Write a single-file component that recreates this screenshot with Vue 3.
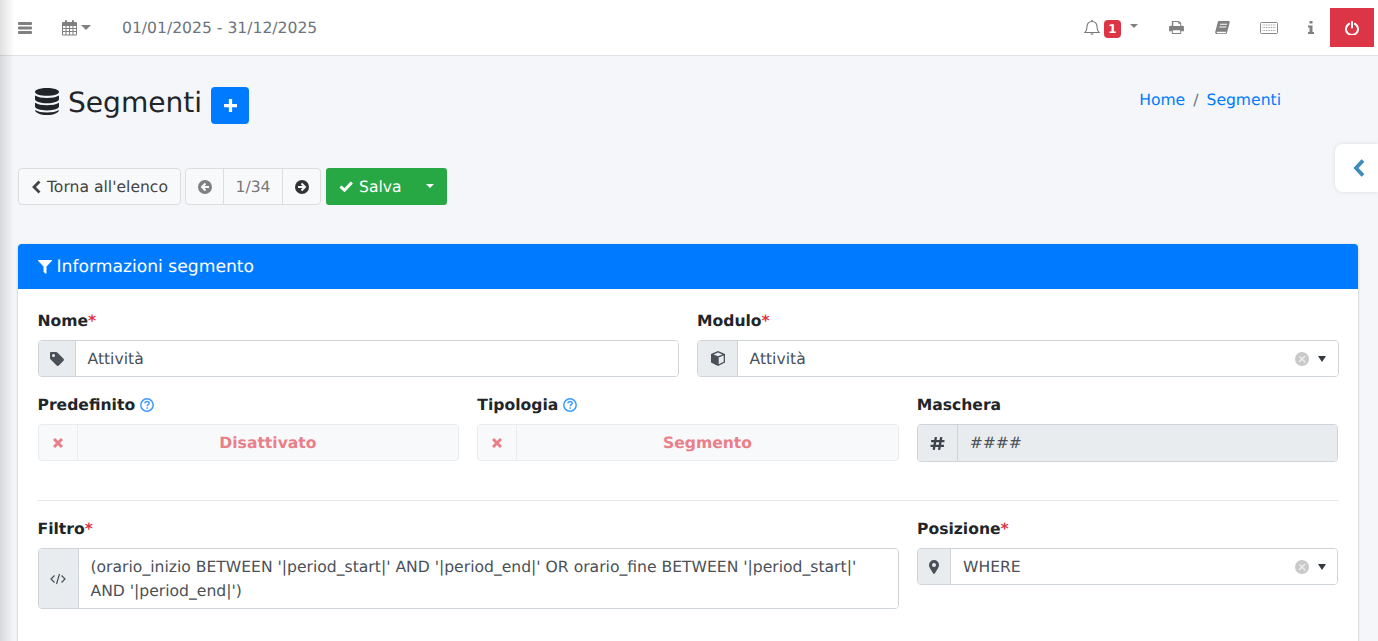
<script setup>
const rightIcons = ['print', 'book', 'keyboard', 'info']
</script>

<template>
  <div class="page">
    <div class="edge"></div>
    <nav class="topbar">
      <svg class="i-bars" viewBox="0 0 14 12"><path d="M1 0h12a1 1 0 0 1 1 1v1a1 1 0 0 1-1 1H1a1 1 0 0 1-1-1V1a1 1 0 0 1 1-1zM1 4.500h12a1 1 0 0 1 1 1v1a1 1 0 0 1-1 1H1a1 1 0 0 1-1-1v-1a1 1 0 0 1 1-1zM1 9h12a1 1 0 0 1 1 1v1a1 1 0 0 1-1 1H1a1 1 0 0 1-1-1v-1a1 1 0 0 1 1-1z"/></svg>
      <svg class="i-cal" viewBox="0 0 15 16"><path fill-rule="evenodd" d="M1 2h2V1a1 1 0 0 1 2 0v1h5V1a1 1 0 0 1 2 0v1h2a1 1 0 0 1 1 1v11.500a1 1 0 0 1-1 1H1a1 1 0 0 1-1-1V3a1 1 0 0 1 1-1zM1 6v2h2.500V6zM4.500 6v2H7V6zM8 6v2h2.500V6zM11.500 6v2H14V6zM1 9v2h2.500V9zM4.500 9v2H7V9zM8 9v2h2.500V9zM11.500 9v2H14V9zM1 12v2.500h2.500V12zM4.500 12v2.500H7V12zM8 12v2.500h2.500V12zM11.500 12v2.500H14V12z"/></svg>
      <span class="caret grey cal-caret"></span>
      <span class="date">01/01/2025 - 31/12/2025</span>
      <div class="nav-right">
        <svg class="i-bell" viewBox="0 0 16 17"><path fill="none" stroke="#777" stroke-width="1.100" d="M1 13.500c1.500-1.500 2-3 2-6 0-3 2-5 5-5s5 2 5 5c0 3 .5 4.500 2 6z"/><path d="M6.300 14.500a1.800 1.800 0 0 0 3.400 0zM7.200 1.500a.8.800 0 0 1 1.600 0v1H7.200z" fill="#777"/></svg>
        <span class="badge">1</span>
        <span class="caret grey bell-caret"></span>
        <template v-for="n in rightIcons" :key="n">
          <svg v-if="n === 'print'" class="i-print" viewBox="0 0 16 14"><path fill-rule="evenodd" d="M3.500 0h7L13 2v3h1.500A1.500 1.500 0 0 1 16 6.500V11h-3v3H3v-3H0V6.500A1.500 1.500 0 0 1 1.500 5H3V0zm1 1v4.500h7.500V3H10V1zM4 10v3h8v-3z"/></svg>
          <svg v-else-if="n === 'book'" class="i-book" viewBox="0 0 16 15"><path fill-rule="evenodd" d="M4 0h10.500c1 0 1.500.7 1.200 1.500L12.800 12.500c-.3.800-1 1.500-2 1.500H2c-1.300 0-2-1-1.800-2.200L3 1c.2-.6.500-1 1-1zM5.500 3l-.3 1h7.500l.3-1zM4.700 6l-.3 1h7.500l.3-1zM2.600 11.500c-.5 0-.8.300-.8.700s.3.800.9.800h8c.5 0 .8-.2 1-.7l.2-.8z"/></svg>
          <svg v-else-if="n === 'keyboard'" class="i-key" viewBox="0 0 18 12"><rect x=".5" y=".5" width="17" height="11" rx="1" fill="#fff" stroke="#8a8a8a"/><path d="M2.500 3h13M2.500 5.500h13M2.500 8.500h13" stroke="#a0a0a0" stroke-width="1.200" stroke-dasharray="1 .7" fill="none"/></svg>
          <svg v-else class="i-info" viewBox="0 0 6 13"><path d="M1.500 0h3v2.500h-3zM0 4.500h4.500V11H6v2H0v-2h1.500V6.500H0z"/></svg>
        </template>
        <button class="power" aria-label="Esci">
          <svg viewBox="0 0 14 14" width="14" height="14"><path fill="none" stroke="#fff" stroke-width="2" stroke-linecap="round" d="M4 2.800a6 6 0 1 0 6 0M7 1v5.500"/></svg>
        </button>
      </div>
    </nav>

    <main class="content">
      <header class="head">
        <h1 class="title">
          <svg class="i-db" viewBox="0 0 24 29" preserveAspectRatio="none"><path d="M12 0c6.600 0 12 1.800 12 4.200S18.600 8.400 12 8.400 0 6.600 0 4.200 5.400 0 12 0zM0 8c2.500 1.800 7 2.700 12 2.700S21.500 9.800 24 8v4c0 2.300-5.400 4.300-12 4.300S0 14.300 0 12zM0 15.800c2.500 1.800 7 2.700 12 2.700s9.500-.9 12-2.700v4.200c0 2.300-5.400 4.200-12 4.200S0 22.300 0 20zM0 23.500c2.500 1.800 7 2.700 12 2.700s9.500-.9 12-2.700c0 3-5.400 5.500-12 5.500S0 26.500 0 23.500z"/></svg>
          <span>Segmenti</span>
          <button class="add" aria-label="Aggiungi">
            <svg viewBox="0 0 12 12" width="13" height="13"><path fill="#fff" d="M4.500 0h3v4.500H12v3H7.500V12h-3V7.500H0v-3h4.500z"/></svg>
          </button>
        </h1>
        <div class="crumbs"><a>Home</a><span class="sep">/</span><a>Segmenti</a></div>
      </header>

      <div class="toolbar">
        <button class="btn light back">
          <svg viewBox="0 0 10 14" width="10" height="14"><path fill="none" stroke="#444" stroke-width="2.800" d="M8.500 1.500 3 7l5.500 5.500"/></svg>
          <span>Torna all'elenco</span>
        </button>
        <div class="pager">
          <span class="pg pg-a"><svg viewBox="0 0 14 14" width="14" height="14"><circle cx="7" cy="7" r="7" fill="#808080"/><path d="M7.500 3.500 4 7l3.500 3.500M4.500 7H11" stroke="#f8f9fa" stroke-width="2" fill="none"/></svg></span>
          <span class="pg pg-num">1/34</span>
          <span class="pg pg-c"><svg viewBox="0 0 14 14" width="14" height="14"><circle cx="7" cy="7" r="7" fill="#333"/><path d="M6.500 3.500 10 7l-3.500 3.500M9.500 7H3" stroke="#f8f9fa" stroke-width="2" fill="none"/></svg></span>
        </div>
        <div class="save">
          <span class="save-main">
            <svg viewBox="0 0 14 11" width="14" height="11"><path fill="none" stroke="#fff" stroke-width="3" d="M1.500 5.500 5.500 9.200 12.800 1.500"/></svg>
            Salva
          </span>
          <span class="save-drop"><span class="caret white"></span></span>
        </div>
      </div>

      <section class="card">
        <div class="card-head">
          <svg viewBox="0 0 14 14" width="14" height="14"><path fill="#fff" d="M.5 0h13c.5 0 .7.500.3.900L8.500 6.500V13c0 .6-.5.800-1 .5L5.700 12c-.2-.2-.2-.3-.2-.5v-5L.2.900C-.2.500 0 0 .5 0z"/></svg>
          <span>Informazioni segmento</span>
        </div>
        <div class="card-body">
          <div class="row two">
            <div class="field">
              <label>Nome<em>*</em></label>
              <div class="group">
                <span class="addon w38"><svg viewBox="0 0 14 14" width="14" height="14"><path fill="#495057" fill-rule="evenodd" d="M1 0h5c.5 0 1 .2 1.300.5l6.200 6.200c.6.600.6 1.500 0 2.100l-4.700 4.700c-.6.600-1.500.6-2.100 0L.5 7.300C.2 7 0 6.500 0 6V1c0-.5.500-1 1-1zm2.500 2A1.500 1.500 0 1 0 3.500 5a1.500 1.500 0 0 0 0-3z"/></svg></span>
                <div class="control">Attività</div>
              </div>
            </div>
            <div class="field">
              <label>Modulo<em>*</em></label>
              <div class="group">
                <span class="addon w41"><svg viewBox="0 0 14 15" width="14" height="15"><path fill="#495057" fill-rule="evenodd" d="M7 0l7 3v8.500L7 15l-7-3.500V3zM7 1.500 2.500 3.400 7 5.300l4.500-1.900zM7.700 6.500v6.700l5-2.500V4.400z"/></svg></span>
                <div class="control select wide"><span>Attività</span><svg class="clear" viewBox="0 0 14 14"><circle cx="7" cy="7" r="7" fill="#c9c9c9"/><path d="M4.500 4.500l6 6M10 4l-6 6" stroke="#f0f0f0" stroke-width="1.300"/></svg><i class="sel-caret"></i></div>
              </div>
            </div>
          </div>

          <div class="row three">
            <div class="field">
              <label>Predefinito <svg class="q" viewBox="0 0 14 14"><circle cx="7" cy="7" r="6.200" fill="none" stroke="#3f9bff" stroke-width="1.500"/><path d="M4.900 5.400C5 4 6 3.400 7.100 3.400c1.200 0 2.100.8 2.100 1.800 0 1.500-2 1.500-2 3" fill="none" stroke="#3f9bff" stroke-width="1.500"/><rect x="6.400" y="9.300" width="1.500" height="1.500" fill="#3f9bff"/></svg></label>
              <div class="toggle"><span class="t-x"><svg viewBox="0 0 10 10" width="10" height="10"><path stroke="#e97f89" stroke-width="3" d="M1 1l8 8M9 1l-8 8"/></svg></span><span class="t-txt">Disattivato</span></div>
            </div>
            <div class="field">
              <label>Tipologia <svg class="q" viewBox="0 0 14 14"><circle cx="7" cy="7" r="6.200" fill="none" stroke="#3f9bff" stroke-width="1.500"/><path d="M4.900 5.400C5 4 6 3.400 7.100 3.400c1.200 0 2.100.8 2.100 1.800 0 1.500-2 1.500-2 3" fill="none" stroke="#3f9bff" stroke-width="1.500"/><rect x="6.400" y="9.300" width="1.500" height="1.500" fill="#3f9bff"/></svg></label>
              <div class="toggle"><span class="t-x"><svg viewBox="0 0 10 10" width="10" height="10"><path stroke="#e97f89" stroke-width="3" d="M1 1l8 8M9 1l-8 8"/></svg></span><span class="t-txt">Segmento</span></div>
            </div>
            <div class="field">
              <label>Maschera</label>
              <div class="group tall">
                <span class="addon w41"><svg viewBox="0 0 14 14" width="15" height="15"><path fill="none" stroke="#3d434a" stroke-width="2.200" d="M5.500 1 3.500 13M10.500 1l-2 12M1 4.800h12.500M.5 9.200H13"/></svg></span>
                <div class="control disabled">####</div>
              </div>
            </div>
          </div>

          <hr />

          <div class="row filter">
            <div class="field">
              <label>Filtro<em>*</em></label>
              <div class="group auto">
                <span class="addon w41"><svg viewBox="0 0 16 12" width="16" height="12"><path fill="none" stroke="#495057" stroke-width="1.200" d="M4.500 2.500 1 6l3.500 3.500M11.500 2.500 15 6l-3.500 3.500M9.500 1 6.500 11"/></svg></span>
                <div class="control multi">(orario_inizio BETWEEN '|period_start|' AND '|period_end|' OR orario_fine BETWEEN '|period_start|' AND '|period_end|')</div>
              </div>
            </div>
            <div class="field">
              <label>Posizione<em>*</em></label>
              <div class="group">
                <span class="addon w34"><svg viewBox="0 0 10 14" width="10" height="14"><path fill="#495057" fill-rule="evenodd" d="M5 0a5 5 0 0 1 5 5c0 1.300-.5 2.300-1 3.200L5.800 13.500c-.4.600-1.200.6-1.600 0L1 8.200C.5 7.300 0 6.300 0 5a5 5 0 0 1 5-5zm0 3a2 2 0 1 0 0 4 2 2 0 0 0 0-4z"/></svg></span>
                <div class="control select"><span>WHERE</span><svg class="clear" viewBox="0 0 14 14"><circle cx="7" cy="7" r="7" fill="#c9c9c9"/><path d="M4.500 4.500l6 6M10 4l-6 6" stroke="#f0f0f0" stroke-width="1.300"/></svg><i class="sel-caret"></i></div>
              </div>
            </div>
          </div>
        </div>
      </section>
    </main>

    <button class="side-tab" aria-label="Apri">
      <svg viewBox="0 0 12 18" width="12" height="18"><path fill="none" stroke="#3c8dbc" stroke-width="3.800" d="M10 1.500 3 9l7 7.500"/></svg>
    </button>
  </div>
</template>

<style>
html, body { margin: 0; padding: 0; }
</style>

<style scoped>
.page {
  position: relative;
  height: 641px;
  overflow: hidden;
  background: #f4f6f9;
  color: #212529;
  font-family: "DejaVu Sans", sans-serif;
  font-size: 15.600px;
  line-height: 24px;
  text-rendering: geometricPrecision;
}
.edge {
  position: absolute;
  left: 0;
  top: 0;
  bottom: 0;
  width: 14px;
  background: linear-gradient(to right, rgba(0, 0, 0, .12), rgba(0, 0, 0, 0));
  pointer-events: none;
  z-index: 3;
}
button { border: 0; padding: 0; font: inherit; text-rendering: inherit; }

/* top bar */
.topbar {
  height: 55px;
  box-sizing: content-box;
  background: #fff;
  border-bottom: 1px solid #dee2e6;
  display: flex;
  align-items: center;
  color: #6c757d;
}
.topbar svg { fill: #808080; display: block; }
.i-bars { width: 14px; height: 12px; margin-left: 18px; }
.i-cal { width: 15px; height: 16px; margin-left: 30px; }
.caret {
  display: inline-block;
  width: 0;
  height: 0;
  border-left: 5px solid transparent;
  border-right: 5px solid transparent;
  border-top: 5px solid #808080;
}
.caret.white { border-top-color: #fff; }
.cal-caret { margin-left: 4px; }
.date { margin-left: 31px; }
.nav-right { margin-left: auto; display: flex; align-items: center; padding-right: 4px; }
.i-bell { width: 16px; height: 17px; }
.badge {
  margin: 2px 0 0 4px;
  width: 17px;
  height: 18px;
  background: #dc3545;
  color: #fff;
  border-radius: 4px;
  font-size: 12px;
  font-weight: 700;
  line-height: 18px;
  text-align: center;
}
.bell-caret { margin-left: 9px; border-left-width: 4px; border-right-width: 4px; border-top-width: 4px; margin-top: -3px; }
.i-print { width: 15px; height: 13px; margin-left: 31px; }
.i-book { width: 15px; height: 14px; margin-left: 31px; }
.i-key { width: 18px; height: 12px; margin-left: 30px; }
.i-info { width: 6px; height: 13px; margin-left: 30px; }
.power {
  margin-left: 16px;
  width: 44px;
  height: 39px;
  background: #dc3545;
  display: flex;
  align-items: center;
  justify-content: center;
}

.content { padding: 0 20px 0 18px; }

/* header */
.head { display: flex; justify-content: space-between; height: 112px; }
.title {
  margin: 0;
  padding: 31px 0 0 17px;
  display: flex;
  align-items: flex-start;
  font-size: 28.080px;
  font-weight: 400;
  line-height: 32px;
}
.i-db { width: 24px; height: 27px; fill: #212529; margin-top: 1px; margin-right: 9px; }
.add {
  width: 38px;
  height: 37px;
  margin-left: 9px;
  background: #007bff;
  border-radius: 4px;
  display: flex;
  align-items: center;
  justify-content: center;
}
.crumbs { padding: 32px 77px 0 0; color: #6c757d; }
.crumbs a { color: #007bff; }
.sep { padding: 0 8px; }

/* toolbar */
.toolbar { display: flex; height: 37px; margin-bottom: 39px; }
.btn.light {
  height: 37px;
  box-sizing: border-box;
  border: 1px solid #ddd;
  background: #f8f9fa;
  color: #444;
  border-radius: 4px;
  display: flex;
  align-items: center;
  gap: 6px;
  padding: 0 12px;
  width: 163px;
  white-space: nowrap;
}
.pager {
  margin-left: 4px;
  width: 136px;
  height: 37px;
  box-sizing: border-box;
  border: 1px solid #ddd;
  border-radius: 4px;
  background: #f8f9fa;
  display: flex;
}
.pg { display: flex; align-items: center; justify-content: center; box-sizing: border-box; }
.pg-a { width: 37px; }
.pg-num { width: 60px; border-left: 1px solid #ddd; border-right: 1px solid #ddd; color: #777; }
.pg-c { flex: 1; }
.save {
  margin-left: 5px;
  width: 121px;
  height: 37px;
  background: #28a745;
  color: #fff;
  border-radius: 3px;
  display: flex;
}
.save-main { flex: 1; display: flex; align-items: center; gap: 6px; padding-left: 13px; }
.save-drop { width: 34px; display: flex; align-items: center; justify-content: center; }
.save-drop .caret { border-left-width: 4px; border-right-width: 4px; border-top-width: 4px; margin-top: -2px; }

/* card */
.card {
  background: #fff;
  border-radius: 4px 4px 0 0;
  box-shadow: 0 0 1px rgba(0, 0, 0, .125), 0 1px 3px rgba(0, 0, 0, .2);
  height: 420px;
}
.card-head {
  height: 45px;
  box-sizing: border-box;
  background: #007bff;
  color: #fff;
  border-radius: 4px 4px 0 0;
  display: flex;
  align-items: center;
  gap: 5px;
  padding: 0 0 0 19.500px;
  font-size: 17.160px;
}
.card-body { padding: 20px 20px 0 19.500px; }
.row { display: grid; column-gap: 18px; }
.two { grid-template-columns: 641.500px 642px; margin-bottom: 16px; }
.three { grid-template-columns: 421.830px 421.330px 1fr; margin-bottom: 38px; }
.filter { grid-template-columns: 861.500px 1fr; }
.field { min-width: 0; }
label {
  display: flex;
  align-items: center;
  height: 24px;
  margin-bottom: 7px;
  font-weight: 700;
  white-space: pre;
}
label em { color: #dc3545; font-style: normal; }
.q { width: 14px; height: 14px; margin-left: -1px; }

.group {
  display: flex;
  height: 37px;
  box-sizing: border-box;
  border: 1px solid #ced4da;
  border-radius: 4px;
  overflow: hidden;
}
.group.tall { height: 38px; }
.group.auto { height: 61px; }
.addon {
  flex: none;
  display: flex;
  align-items: center;
  justify-content: center;
  background: #e9ecef;
  border-right: 1px solid #ced4da;
  color: #495057;
  box-sizing: border-box;
}
.w38 { width: 37px; }
.w41 { width: 40px; }
.w34 { width: 33px; }
.control {
  flex: 1;
  min-width: 0;
  display: flex;
  align-items: center;
  padding: 0 12px;
  color: #495057;
  background: #fff;
}
.control.wide { padding: 0 13px 0 11.500px; }
.control.disabled { background: #e9ecef; }
.control.multi { align-items: flex-start; padding-top: 6px; line-height: 24px; }
.select span { flex: 1; }
.clear {
  width: 14px;
  height: 14px;
  flex: none;
  margin-right: 9px;
}
.sel-caret {
  width: 0;
  height: 0;
  border-left: 4px solid transparent;
  border-right: 4px solid transparent;
  border-top: 6px solid #343a40;
  margin-right: -1px;
}
.toggle {
  display: flex;
  height: 37px;
  box-sizing: border-box;
  border: 1px solid #e9ecef;
  border-radius: 4px;
  background: #f8f9fa;
}
.t-x {
  width: 38px;
  flex: none;
  display: flex;
  align-items: center;
  justify-content: center;
  border-right: 1px solid #e9ecef;
}
.t-txt {
  flex: 1;
  display: flex;
  align-items: center;
  justify-content: center;
  color: #e97f89;
  font-weight: 700;
}
hr { border: 0; border-top: 1px solid #e5e7ea; margin: 0 0 16px; }

.side-tab {
  position: absolute;
  right: 0;
  top: 144px;
  width: 43px;
  height: 48px;
  background: #fff;
  border-radius: 8px 0 0 8px;
  box-shadow: 0 0 4px rgba(0, 0, 0, .1);
  display: flex;
  align-items: center;
  justify-content: flex-start;
  padding-left: 18px;
  box-sizing: border-box;
}
</style>
